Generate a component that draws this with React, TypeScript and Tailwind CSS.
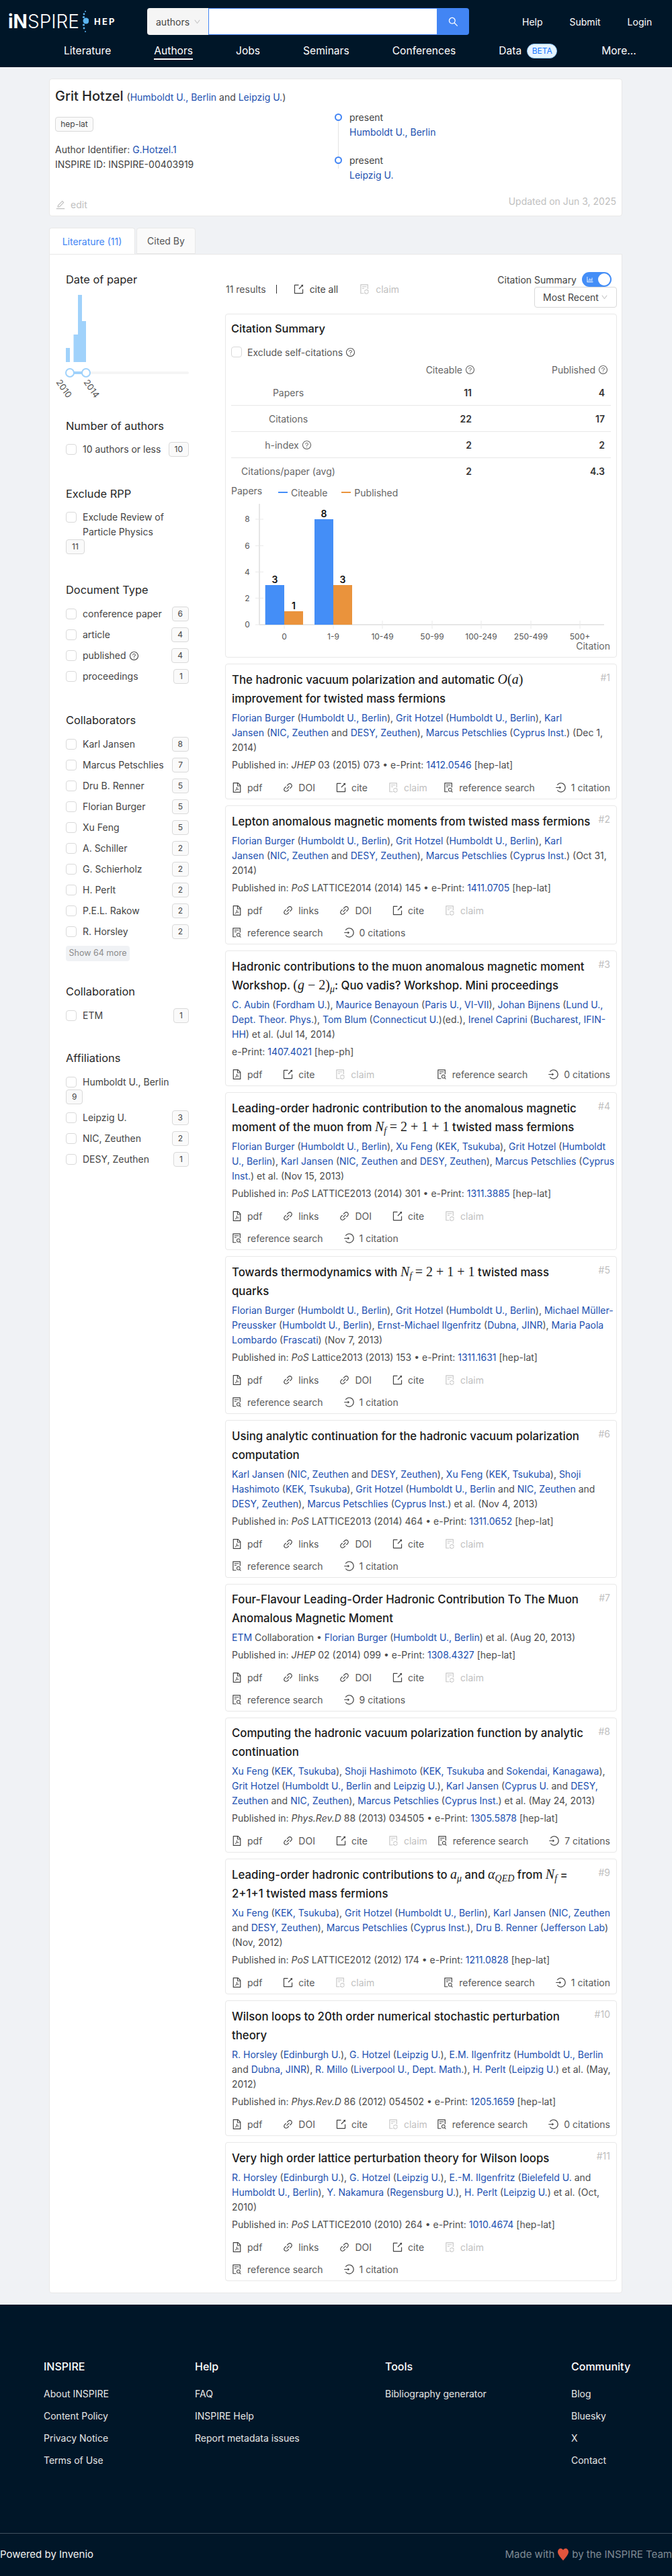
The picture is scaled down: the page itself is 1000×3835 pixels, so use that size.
import React from "react";
import {
  AiOutlineDown, AiOutlineSearch, AiOutlineEdit, AiOutlineExport, AiOutlineFileSync, AiOutlineQuestionCircle,
  AiOutlineBarChart, AiOutlineFilePdf, AiOutlineLink, AiOutlineFileSearch, AiOutlineLogin,
} from "react-icons/ai";

const rich = (s: string) =>
  s.split(/(\{[^}]*\}|\*[^*]*\*)/).map((p, i) => {
    if (p.startsWith("{")) return <a key={i} className="text-[#2150b0]">{p.slice(1, -1)}</a>;
    if (p.startsWith("*")) return <i key={i}>{p.slice(1, -1)}</i>;
    return <span key={i}>{p}</span>;
  });

const M = ({ children }: { children: React.ReactNode }) => (
  <span className="font-['Liberation_Serif',serif] font-normal text-[20px] leading-none">{children}</span>
);
const Sub = ({ children }: { children: React.ReactNode }) => (
  <span className="text-[14px] leading-none align-[-4px] italic">{children}</span>
);
const Nf = () => <M><i>N</i><Sub>f</Sub></M>;

type Paper = {
  n: number;
  title: React.ReactNode;
  authors: string[];
  pub: string;
  items: string[];
  cites: string;
  lead?: string;
};

const P1 = ["pdf", "links", "DOI", "cite", "claim"];
const papers: Paper[] = [
  {
    n: 1,
    title: <>The hadronic vacuum polarization and automatic <M><i>O</i>(<i>a</i>)</M><br />improvement for twisted mass fermions</>,
    authors: [
      "{Florian Burger} ({Humboldt U., Berlin}), {Grit Hotzel} ({Humboldt U., Berlin}), {Karl}",
      "{Jansen} ({NIC, Zeuthen} and {DESY, Zeuthen}), {Marcus Petschlies} ({Cyprus Inst.}) (Dec 1,",
      "2014)",
    ],
    pub: "Published in: *JHEP* 03 (2015) 073 • e-Print: {1412.0546} [hep-lat]",
    items: ["pdf", "DOI", "cite", "claim"],
    cites: "1 citation",
  },
  {
    n: 2,
    title: <>Lepton anomalous magnetic moments from twisted mass fermions</>,
    authors: [
      "{Florian Burger} ({Humboldt U., Berlin}), {Grit Hotzel} ({Humboldt U., Berlin}), {Karl}",
      "{Jansen} ({NIC, Zeuthen} and {DESY, Zeuthen}), {Marcus Petschlies} ({Cyprus Inst.}) (Oct 31,",
      "2014)",
    ],
    pub: "Published in: *PoS* LATTICE2014 (2014) 145 • e-Print: {1411.0705} [hep-lat]",
    items: P1,
    cites: "0 citations",
  },
  {
    n: 3,
    title: <>Hadronic contributions to the muon anomalous magnetic moment<br />Workshop. <M>(<i>g</i> − 2)<Sub>μ</Sub></M>: Quo vadis? Workshop. Mini proceedings</>,
    authors: [
      "{C. Aubin} ({Fordham U.}), {Maurice Benayoun} ({Paris U., VI-VII}), {Johan Bijnens} ({Lund U.,}",
      "{Dept. Theor. Phys.}), {Tom Blum} ({Connecticut U.})(ed.), {Irenel Caprini} ({Bucharest, IFIN-}",
      "{HH}) et al. (Jul 14, 2014)",
    ],
    pub: "e-Print: {1407.4021} [hep-ph]",
    items: ["pdf", "cite", "claim"],
    cites: "0 citations",
  },
  {
    n: 4,
    title: <>Leading-order hadronic contribution to the anomalous magnetic<br />moment of the muon from <Nf /> <M>= 2 + 1 + 1</M> twisted mass fermions</>,
    authors: [
      "{Florian Burger} ({Humboldt U., Berlin}), {Xu Feng} ({KEK, Tsukuba}), {Grit Hotzel} ({Humboldt}",
      "{U., Berlin}), {Karl Jansen} ({NIC, Zeuthen} and {DESY, Zeuthen}), {Marcus Petschlies} ({Cyprus}",
      "{Inst.}) et al. (Nov 15, 2013)",
    ],
    pub: "Published in: *PoS* LATTICE2013 (2014) 301 • e-Print: {1311.3885} [hep-lat]",
    items: P1,
    cites: "1 citation",
  },
  {
    n: 5,
    title: <>Towards thermodynamics with <Nf /> <M>= 2 + 1 + 1</M> twisted mass<br />quarks</>,
    authors: [
      "{Florian Burger} ({Humboldt U., Berlin}), {Grit Hotzel} ({Humboldt U., Berlin}), {Michael Müller-}",
      "{Preussker} ({Humboldt U., Berlin}), {Ernst-Michael Ilgenfritz} ({Dubna, JINR}), {Maria Paola}",
      "{Lombardo} ({Frascati}) (Nov 7, 2013)",
    ],
    pub: "Published in: *PoS* Lattice2013 (2013) 153 • e-Print: {1311.1631} [hep-lat]",
    items: P1,
    cites: "1 citation",
  },
  {
    n: 6,
    title: <>Using analytic continuation for the hadronic vacuum polarization<br />computation</>,
    authors: [
      "{Karl Jansen} ({NIC, Zeuthen} and {DESY, Zeuthen}), {Xu Feng} ({KEK, Tsukuba}), {Shoji}",
      "{Hashimoto} ({KEK, Tsukuba}), {Grit Hotzel} ({Humboldt U., Berlin} and {NIC, Zeuthen} and",
      "{DESY, Zeuthen}), {Marcus Petschlies} ({Cyprus Inst.}) et al. (Nov 4, 2013)",
    ],
    pub: "Published in: *PoS* LATTICE2013 (2014) 464 • e-Print: {1311.0652} [hep-lat]",
    items: P1,
    cites: "1 citation",
  },
  {
    n: 7,
    title: <>Four-Flavour Leading-Order Hadronic Contribution To The Muon<br />Anomalous Magnetic Moment</>,
    authors: ["{ETM} Collaboration • {Florian Burger} ({Humboldt U., Berlin}) et al. (Aug 20, 2013)"],
    pub: "Published in: *JHEP* 02 (2014) 099 • e-Print: {1308.4327} [hep-lat]",
    items: P1,
    cites: "9 citations",
    lead: "leading-[27.5px]",
  },
  {
    n: 8,
    title: <>Computing the hadronic vacuum polarization function by analytic<br />continuation</>,
    authors: [
      "{Xu Feng} ({KEK, Tsukuba}), {Shoji Hashimoto} ({KEK, Tsukuba} and {Sokendai, Kanagawa}),",
      "{Grit Hotzel} ({Humboldt U., Berlin} and {Leipzig U.}), {Karl Jansen} ({Cyprus U.} and {DESY,}",
      "{Zeuthen} and {NIC, Zeuthen}), {Marcus Petschlies} ({Cyprus Inst.}) et al. (May 24, 2013)",
    ],
    pub: "Published in: *Phys.Rev.D* 88 (2013) 034505 • e-Print: {1305.5878} [hep-lat]",
    items: ["pdf", "DOI", "cite", "claim"],
    cites: "7 citations",
    lead: "leading-[27.5px]",
  },
  {
    n: 9,
    title: <>Leading-order hadronic contributions to <M><i>a</i><Sub>μ</Sub></M> and <M><i>α</i><Sub>QED</Sub></M> from <Nf /> =<br />2+1+1 twisted mass fermions</>,
    authors: [
      "{Xu Feng} ({KEK, Tsukuba}), {Grit Hotzel} ({Humboldt U., Berlin}), {Karl Jansen} ({NIC, Zeuthen}",
      "and {DESY, Zeuthen}), {Marcus Petschlies} ({Cyprus Inst.}), {Dru B. Renner} ({Jefferson Lab})",
      "(Nov, 2012)",
    ],
    pub: "Published in: *PoS* LATTICE2012 (2012) 174 • e-Print: {1211.0828} [hep-lat]",
    items: ["pdf", "cite", "claim"],
    cites: "1 citation",
  },
  {
    n: 10,
    title: <>Wilson loops to 20th order numerical stochastic perturbation<br />theory</>,
    authors: [
      "{R. Horsley} ({Edinburgh U.}), {G. Hotzel} ({Leipzig U.}), {E.M. Ilgenfritz} ({Humboldt U., Berlin}",
      "and {Dubna, JINR}), {R. Millo} ({Liverpool U., Dept. Math.}), {H. Perlt} ({Leipzig U.}) et al. (May,",
      "2012)",
    ],
    pub: "Published in: *Phys.Rev.D* 86 (2012) 054502 • e-Print: {1205.1659} [hep-lat]",
    items: ["pdf", "DOI", "cite", "claim"],
    cites: "0 citations",
  },
  {
    n: 11,
    title: <>Very high order lattice perturbation theory for Wilson loops</>,
    authors: [
      "{R. Horsley} ({Edinburgh U.}), {G. Hotzel} ({Leipzig U.}), {E.-M. Ilgenfritz} ({Bielefeld U.} and",
      "{Humboldt U., Berlin}), {Y. Nakamura} ({Regensburg U.}), {H. Perlt} ({Leipzig U.}) et al. (Oct,",
      "2010)",
    ],
    pub: "Published in: *PoS* LATTICE2010 (2010) 264 • e-Print: {1010.4674} [hep-lat]",
    items: P1,
    cites: "1 citation",
  },
];

const icons: Record<string, any> = {
  pdf: AiOutlineFilePdf, links: AiOutlineLink, DOI: AiOutlineLink, cite: AiOutlineExport, claim: AiOutlineFileSync,
  ref: AiOutlineFileSearch, c: AiOutlineLogin,
};

const Action = ({ k, label }: { k: string; label: string }) => {
  const Icon = icons[k];
  const off = k === "claim";
  return (
    <span className={`flex items-center gap-2 h-[33px] ${off ? "text-[#bfbfbf]" : "text-[#595959]"}`}>
      <Icon className={`text-[17px] -mx-px ${off ? "text-[#c8c8c8]" : "text-[#444]"}`} />
      <span>{label}</span>
    </span>
  );
};

const PaperCard = ({ p }: { p: Paper }) => (
  <div className="mt-[9px] bg-white border border-[#e8e8e8] rounded-sm pt-[9px] pl-[9px] pr-[9px]">
    <div className="flex justify-between">
      <div className={`whitespace-nowrap text-[16.8px] font-medium text-[#1a1a1a] ${p.lead ?? "leading-[28px]"}`}>{p.title}</div>
      <span className="text-[#bfbfbf] text-[14px] leading-[22px]">#{p.n}</span>
    </div>
    <div className="mt-1 text-[14px] leading-[22px] text-[#4d4d4d] whitespace-nowrap">
      {p.authors.map((a, i) => <div key={i}>{rich(a)}</div>)}
    </div>
    <div className="mt-1 text-[14px] leading-[22px] text-[#4d4d4d] whitespace-nowrap">{rich(p.pub)}</div>
    <div className="mt-[6px] flex flex-wrap justify-between text-[14px]">
      <div className="flex gap-[31px]">{p.items.map((k) => <Action key={k} k={k} label={k} />)}</div>
      <div className="flex gap-[31px]">
        <Action k="ref" label="reference search" />
        <Action k="c" label={p.cites} />
      </div>
    </div>
  </div>
);

const Check = () => <span className="block shrink-0 w-4 h-4 bg-white border border-[#d9d9d9] rounded-sm" />;

const FacetRow = ({ label, n, help }: { label: string; n: number; help?: boolean }) => (
  <div className="flex flex-wrap justify-between gap-x-[10px] items-start">
    <div className="flex items-start gap-[9px] text-[14px] leading-[22px] text-[#444]">
      <span className="mt-[3px]"><Check /></span>
      <span className="flex items-center gap-1">{help ? <>{label} <AiOutlineQuestionCircle className="text-[15px]" /></> : label}</span>
    </div>
    <span className="h-[22px] min-w-[23px] px-[8px] flex items-center justify-center bg-[#fafafa] border border-[#d9d9d9] rounded-sm text-[12px] text-[#444]">{n}</span>
  </div>
);

const Heading = ({ children, cls }: { children: React.ReactNode; cls: string }) => (
  <div className={`text-[16.4px] leading-[24px] text-[#262626] ${cls}`}>{children}</div>
);

const Facets = ({ rows }: { rows: [string, number, boolean?][] }) => (
  <div className="mt-[13px] flex flex-col gap-[9px]">
    {rows.map(([l, n, h]) => <FacetRow key={l} label={l} n={n} help={h} />)}
  </div>
);

const Sidebar = () => (
  <aside className="w-[183px] shrink-0 ml-[24px] pt-[25px]">
    <Heading cls="">Date of paper</Heading>
    <svg width="183" height="180" viewBox="0 0 183 180" className="overflow-visible block" fontFamily="Inter, sans-serif">
      <g fill="#a0d2fb">
        <rect x="0" y="90" width="6" height="21" />
        <rect x="11.5" y="70" width="6.5" height="41" />
        <rect x="18" y="11" width="6" height="100" />
        <rect x="24" y="50" width="6" height="61" />
      </g>
      <rect x="0" y="125" width="183" height="4" rx="2" fill="#f5f5f5" />
      <rect x="6" y="125" width="24" height="4" fill="#a0d2fb" />
      <circle cx="6" cy="127" r="6" fill="#fff" stroke="#a0d2fb" strokeWidth="2" />
      <circle cx="30" cy="127" r="6" fill="#fff" stroke="#a0d2fb" strokeWidth="2" />
      <text x="-15" y="141" fontSize="13" fill="#555" transform="rotate(55 -15 141)">2010</text>
      <text x="26" y="141" fontSize="13" fill="#555" transform="rotate(55 26 141)">2014</text>
    </svg>
    <Heading cls="mt-[14px]">Number of authors</Heading>
    <div className="mt-3"><FacetRow label="10 authors or less" n={10} /></div>
    <Heading cls="mt-[43px]">Exclude RPP</Heading>
    <div className="mt-3"><FacetRow label="Exclude Review of Particle Physics" n={11} /></div>
    <Heading cls="mt-[41px]">Document Type</Heading>
    <Facets rows={[["conference paper", 6], ["article", 4], ["published", 4, true], ["proceedings", 1]]} />
    <Heading cls="mt-[42px]">Collaborators</Heading>
    <Facets rows={[["Karl Jansen", 8], ["Marcus Petschlies", 7], ["Dru B. Renner", 5], ["Florian Burger", 5], ["Xu Feng", 5], ["A. Schiller", 2], ["G. Schierholz", 2], ["H. Perlt", 2], ["P.E.L. Rakow", 2], ["R. Horsley", 2]]} />
    <div className="mt-[10px] w-[95px] h-[23px] flex items-center justify-center bg-[#f0f2f5] rounded text-[12.5px] text-[#8c8c8c] whitespace-nowrap">Show 64 more</div>
    <Heading cls="mt-[33px]">Collaboration</Heading>
    <Facets rows={[["ETM", 1]]} />
    <Heading cls="mt-[40px]">Affiliations</Heading>
    <Facets rows={[["Humboldt U., Berlin", 9], ["Leipzig U.", 3], ["NIC, Zeuthen", 2], ["DESY, Zeuthen", 1]]} />
  </aside>
);

const Chart = () => {
  const ox = 344, oy = 745;
  const X = (v: number) => v - ox, Y = (v: number) => v - oy;
  const yt = [[8, 773], [6, 812.5], [4, 851.5], [2, 890.5], [0, 930]];
  const xt = [["0", 423], ["1-9", 496], ["10-49", 569], ["50-99", 643], ["100-249", 716], ["250-499", 790], ["500+", 863]] as [string, number][];
  const bars = [
    [394.7, 423, 871, "#448ef7", "3"], [423, 451, 910, "#ea933c", "1"],
    [468, 496, 773, "#448ef7", "8"], [496, 524, 871, "#ea933c", "3"],
  ] as [number, number, number, string, string][];
  return (
    <svg width="565" height="230" viewBox="0 0 565 230" className="block" fontFamily="Inter, sans-serif">
      {yt.map(([l, y]) => (
        <g key={l}>
          <line x1={X(380)} x2={X(392)} y1={Y(y)} y2={Y(y)} stroke="#eaeaea" />
          <text x={X(368)} y={Y(y) + 4} fontSize="12" fill="#555" textAnchor="middle">{l}</text>
        </g>
      ))}
      <line x1={X(386)} x2={X(386)} y1={Y(750)} y2={Y(930)} stroke="#e6e6e6" strokeWidth="2" />
      <line x1={X(386)} x2={X(899)} y1={Y(930)} y2={Y(930)} stroke="#e6e6e6" strokeWidth="2" />
      {xt.map(([l, x]) => (
        <g key={l}>
          <line x1={X(x)} x2={X(x)} y1={Y(924)} y2={Y(936)} stroke="#eaeaea" />
          <text x={X(x)} y={Y(952)} fontSize="12" fill="#555" textAnchor="middle">{l}</text>
        </g>
      ))}
      {bars.map(([a, b, t, c, l], i) => (
        <g key={i}>
          <rect x={X(a)} y={Y(t)} width={b - a} height={930 - t} fill={c} />
          <text x={X((a + b) / 2)} y={Y(t) - 3} fontSize="14" fontWeight="600" fill="#111" textAnchor="middle">{l}</text>
        </g>
      ))}
      <text x="564" y={Y(967)} fontSize="14" fill="#666" textAnchor="end">Citation</text>
    </svg>
  );
};

const Stat = ({ label, a, b, last }: { label: React.ReactNode; a: string; b: string; last?: boolean }) => (
  <div className={`grid grid-cols-[170px_188px_198px] h-[39px] items-center w-[565px] text-[14px] ${last ? "" : "border-b border-[#e8e8e8]"}`}>
    <span className="flex items-center justify-center gap-1 text-[#666] whitespace-nowrap">{label}</span>
    <span className="text-right font-semibold text-[#333]">{a}</span>
    <span className="text-right font-semibold text-[#333]">{b}</span>
  </div>
);

const Summary = () => (
  <div className="mt-[9px] h-[512px] bg-white border border-[#e8e8e8] rounded-sm pl-2 pt-[10px] overflow-hidden">
    <div className="text-[16.4px] leading-[22px] font-medium text-[#1a1a1a]">Citation Summary</div>
    <div className="mt-[13px] h-[22px] flex items-center gap-2 text-[14px] text-[#555]">
      <Check /> Exclude self-citations <AiOutlineQuestionCircle className="text-[15px] -ml-1" />
    </div>
    <div className="grid grid-cols-[170px_193px_198px] h-[30px] items-center w-[565px] text-[14px] text-[#666]">
      <span />
      <span className="flex justify-end items-center gap-1">Citeable <AiOutlineQuestionCircle className="text-[15px]" /></span>
      <span className="flex justify-end items-center gap-1">Published <AiOutlineQuestionCircle className="text-[15px]" /></span>
    </div>
    <Stat label="Papers" a="11" b="4" />
    <Stat label="Citations" a="22" b="17" />
    <Stat label={<>h-index <AiOutlineQuestionCircle className="text-[15px]" /></>} a="2" b="2" />
    <Stat label="Citations/paper (avg)" a="2" b="4.3" last />
    <div className="h-[24px] flex items-center text-[14px] text-[#666] relative">
      <span className="-mt-[6px] w-[45px]">Papers</span>
      <span className="ml-[25px] w-[14px] h-[2px] bg-[#448ef7]" />
      <span className="ml-[5px]">Citeable</span>
      <span className="ml-[21px] w-[14px] h-[2px] bg-[#ea933c]" />
      <span className="ml-[5px]">Published</span>
    </div>
    <Chart />
  </div>
);

const Results = () => (
  <section className="w-[583px] ml-[54px] pt-[26px] pb-[17px]">
    <div className="flex justify-between items-start h-[53px] text-[14px]">
      <div className="flex items-center h-[22px] mt-[14px] ml-px text-[#555]">
        <span>11 results</span>
        <span className="ml-[15px] w-px h-[13px] bg-[#333]" />
        <span className="ml-[24px] flex items-center gap-2 text-[#444]"><AiOutlineExport className="text-[17px]" /> cite all</span>
        <span className="ml-[31px] flex items-center gap-2 text-[#bfbfbf]"><AiOutlineFileSync className="text-[17px] text-[#c8c8c8]" /> claim</span>
      </div>
      <div className="flex flex-col items-end">
        <div className="flex items-center gap-2 h-[22px] pr-2 text-[#444]">
          <span>Citation Summary</span>
          <span className="w-[44px] h-[22px] rounded-full bg-[#448ef7] flex items-center justify-between pl-[6px] pr-[2px]">
            <AiOutlineBarChart className="text-white text-[12px]" />
            <span className="w-[18px] h-[18px] rounded-full bg-white" />
          </span>
        </div>
        <div className="w-[123px] h-[31px] border border-[#d9d9d9] rounded-sm flex items-center justify-between px-3 text-[#444] whitespace-nowrap">
          Most Recent <AiOutlineDown className="text-[11px] text-[#bfbfbf]" />
        </div>
      </div>
    </div>
    <Summary />
    {papers.map((p) => <PaperCard key={p.n} p={p} />)}
  </section>
);

const Logo = () => (
  <div className="flex items-center h-[40px] w-[219px] pl-3 text-white">
    <span className="text-[28px] leading-none"><span className="font-bold">iN</span><span className="font-light">SPIRE</span></span>
    <svg width="12" height="34" viewBox="0 0 12 34" className="ml-[2px]" fill="#5ab4f0">
      <circle cx="7" cy="2" r="1" /><circle cx="5" cy="6" r="1.4" /><circle cx="4.5" cy="10.5" r="1.6" />
      <circle cx="8" cy="16" r="4.5" /><circle cx="4.5" cy="22" r="1.6" /><circle cx="5" cy="27" r="1.4" /><circle cx="7" cy="32" r="1" />
    </svg>
    <span className="ml-[8px] text-[13px] font-bold tracking-[2.2px] leading-none">HEP</span>
  </div>
);

const Header = () => (
  <header className="h-[100px] bg-[#001628] text-white">
    <div className="flex h-[64px] pt-3">
      <Logo />
      <div className="flex h-[40px] w-[479px]">
        <div className="w-[91px] bg-[#f5f5f5] rounded-l-sm flex items-center justify-between pl-[13px] pr-[11px] text-[14px] text-[#444]">
          authors <AiOutlineDown className="text-[11px] text-[#bfbfbf]" />
        </div>
        <div className="flex-1 bg-white border border-[#4285f4]" />
        <div className="w-[47px] bg-[#4285f4] rounded-r-sm flex items-center justify-center"><AiOutlineSearch className="text-[17px]" /></div>
      </div>
      <div className="ml-[79px] flex gap-[40px] h-[40px] items-center text-[14px]">
        <span>Help</span><span>Submit</span><span>Login</span>
      </div>
    </div>
    <nav className="flex items-center gap-[64px] h-[24px] pl-[95px] text-[15.6px]">
      <span>Literature</span>
      <span className="relative">Authors<span className="absolute left-0 right-0 -bottom-[1px] h-[2px] bg-white" /></span>
      <span>Jobs</span>
      <span>Seminars</span>
      <span>Conferences</span>
      <span className="flex items-center gap-2">Data
        <span className="w-[45px] h-[22px] rounded-full bg-[#e6f4ff] border border-[#91caff] text-[#1677ff] text-[12px] flex items-center justify-center">BETA</span>
      </span>
      <span className="ml-[2px]">More...</span>
    </nav>
  </header>
);

const Dot = () => <span className="absolute left-[-1px] top-[5px] w-[11px] h-[11px] rounded-full bg-white border-[2px] border-[#4285f4]" />;

const AuthorCard = () => (
  <div className="ml-[73px] w-[853px] h-[205px] bg-white border border-[#e8e8e8] rounded-sm pl-2 pr-2 pt-[10px] flex flex-col text-[14px] text-[#444]">
    <div className="flex items-baseline h-[30px]">
      <span className="text-[20px] leading-[30px] font-medium text-[#262626]">Grit Hotzel</span>
      <span className="ml-[5px]">({rich("{Humboldt U., Berlin} and {Leipzig U.}")})</span>
    </div>
    <div className="flex mt-[6px]">
      <div className="w-[417px]">
        <span className="mt-[10px] block w-[57px] h-[22px] bg-[#fafafa] border border-[#d9d9d9] rounded-sm text-[12px] leading-[20px] text-center">hep-lat</span>
        <div className="mt-[16px] leading-[22px]">Author Identifier: {rich("{G.Hotzel.1}")}</div>
        <div className="leading-[22px]">INSPIRE ID: INSPIRE-00403919</div>
      </div>
      <div className="relative pl-[21px] leading-[21.5px]">
        <span className="absolute left-[4px] top-[10px] bottom-[20px] w-px bg-[#e3e3e3]" />
        <div className="relative -ml-[21px] pl-[21px]"><Dot />present</div>
        <div>{rich("{Humboldt U., Berlin}")}</div>
        <div className="relative -ml-[21px] pl-[21px] mt-[21px]"><Dot />present</div>
        <div>{rich("{Leipzig U.}")}</div>
      </div>
    </div>
    <div className="mt-auto mb-[6px] flex justify-between items-start text-[#bfbfbf]">
      <span className="flex items-center gap-[7px] mt-[5px]"><AiOutlineEdit className="text-[16px]" /> edit</span>
      <span className="mb-1">Updated on Jun 3, 2025</span>
    </div>
  </div>
);

const Tabs = () => (
  <div className="flex ml-[73px] mt-[17px] h-[39px] gap-[2px] text-[14px]">
    <div className="w-[128px] bg-white border border-b-0 border-[#e8e8e8] rounded-t-sm flex items-center justify-center text-[#4285f4]">Literature (11)</div>
    <div className="w-[88px] bg-[#fafafa] border border-[#e8e8e8] rounded-t-sm flex items-center justify-center text-[#555]">Cited By</div>
  </div>
);

const FootCol = ({ w, title, links }: { w: string; title: string; links: string[] }) => (
  <div className={w}>
    <div className="text-[16px] leading-[24px] font-medium text-white">{title}</div>
    <div className="mt-[18px] flex flex-col gap-[11px] text-[14px] leading-[22px] text-[#e6e6e6]">
      {links.map((l) => <span key={l}>{l}</span>)}
    </div>
  </div>
);

const Footer = () => (
  <footer className="mt-[17px] h-[405px] bg-[#001628] flex flex-col">
    <div className="pt-[80px] pl-[65px] h-[340px] flex whitespace-nowrap">
      <FootCol w="w-[225px]" title="INSPIRE" links={["About INSPIRE", "Content Policy", "Privacy Notice", "Terms of Use"]} />
      <FootCol w="w-[283px]" title="Help" links={["FAQ", "INSPIRE Help", "Report metadata issues"]} />
      <FootCol w="w-[277px]" title="Tools" links={["Bibliography generator"]} />
      <FootCol w="w-[100px]" title="Community" links={["Blog", "Bluesky", "X", "Contact"]} />
    </div>
    <div className="flex-1 border-t border-[#ffffff40] flex justify-between items-center pb-[2px] text-[15px]">
      <span className="text-[#f0f0f0]">Powered by Invenio</span>
      <span className="flex items-center gap-[3px] text-[#7f8a94] whitespace-nowrap">
        Made with
        <svg width="20" height="20" viewBox="0 0 20 20" className="-my-1"><path d="M10 19 C6 14 2 10 2 6 C2 3 4 1 6.3 1 C8 1 9.4 2 10 3.5 C10.6 2 12 1 13.7 1 C16 1 18 3 18 6 C18 10 14 14 10 19 Z" fill="#e2553d" /></svg>
        by the INSPIRE Team
      </span>
    </div>
  </footer>
);

export default function App() {
  return (
    <div className="w-[1000px] bg-[#f0f2f5] font-['Inter',sans-serif] text-[14px]">
      <Header />
      <div className="pt-[17px]">
        <AuthorCard />
        <Tabs />
        <main className="ml-[73px] w-[853px] bg-white border border-[#e8e8e8] rounded-b-sm flex">
          <Sidebar />
          <Results />
        </main>
      </div>
      <Footer />
    </div>
  );
}
